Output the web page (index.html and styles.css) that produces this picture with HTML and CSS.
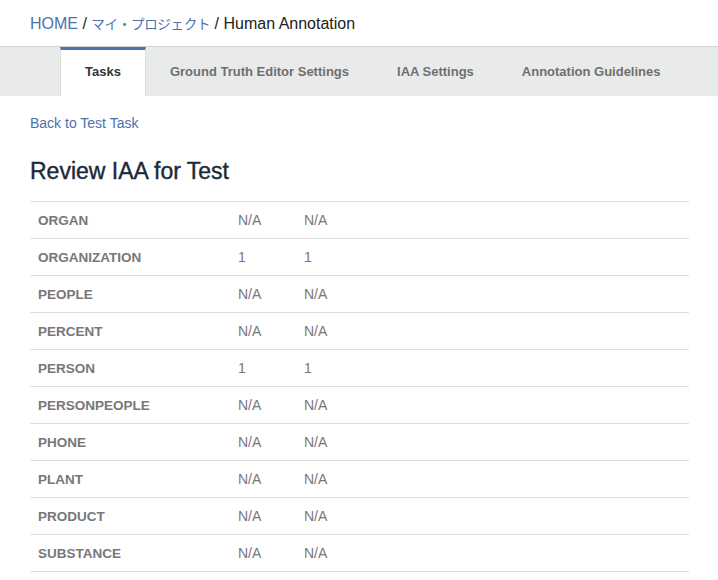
FILE: index.html
```html
<!DOCTYPE html>
<html lang="en">
<head>
    <meta charset="UTF-8">
    <title>Review IAA</title>
    <link rel="stylesheet" href="styles.css">
</head>
<body>
    <div class="breadcrumb">
        <a href="#">HOME</a> / <a class="jp" href="#">マイ・プロジェクト</a> / <span>Human Annotation</span>
    </div>
    <div class="tabs">
        <div class="tab active">Tasks</div>
        <div class="tab">Ground Truth Editor Settings</div>
        <div class="tab">IAA Settings</div>
        <div class="tab">Annotation Guidelines</div>
    </div>
    <div class="content">
        <a class="back-link" href="#">Back to Test Task</a>
        <h1 class="title">Review IAA for Test</h1>
        <table class="iaa-table">
            <tr><td class="type">ORGAN</td><td>N/A</td><td>N/A</td><td></td></tr>
            <tr><td class="type">ORGANIZATION</td><td>1</td><td>1</td><td></td></tr>
            <tr><td class="type">PEOPLE</td><td>N/A</td><td>N/A</td><td></td></tr>
            <tr><td class="type">PERCENT</td><td>N/A</td><td>N/A</td><td></td></tr>
            <tr><td class="type">PERSON</td><td>1</td><td>1</td><td></td></tr>
            <tr><td class="type">PERSONPEOPLE</td><td>N/A</td><td>N/A</td><td></td></tr>
            <tr><td class="type">PHONE</td><td>N/A</td><td>N/A</td><td></td></tr>
            <tr><td class="type">PLANT</td><td>N/A</td><td>N/A</td><td></td></tr>
            <tr><td class="type">PRODUCT</td><td>N/A</td><td>N/A</td><td></td></tr>
            <tr><td class="type">SUBSTANCE</td><td>N/A</td><td>N/A</td><td></td></tr>
        </table>
    </div>
</body>
</html>
```

FILE: styles.css
```css
/* Global */
body {
    font-family: "Liberation Sans", Arial, "Noto Sans CJK JP", sans-serif;
    margin: 0;
    padding: 0;
    background-color: #fff;
    color: #333;
}

a {
    color: #4a72ad;
    text-decoration: none;
}

/* Breadcrumb */
.breadcrumb {
    padding: 2px 30px 0 30px;
    height: 44px;
    line-height: 44px;
    font-size: 16px;
    color: #222;
}

.breadcrumb .jp {
    font-size: 13.5px;
    letter-spacing: -0.3px;
}

/* Tabs */
.tabs {
    display: flex;
    height: 49px;
    padding-left: 60px;
    background-color: #e9ebeb;
    border-top: 1px solid #d4d4d4;
}

.tab {
    display: flex;
    align-items: center;
    padding: 0 23px 4px 23px;
    font-size: 13px;
    font-weight: bold;
    white-space: nowrap;
    color: #6f6f6f;
    border-left: 1px solid transparent;
    border-right: 1px solid transparent;
    border-top: 3px solid transparent;
}

.tab.active {
    padding: 0 24px 4px 24px;
    background-color: #fff;
    color: #333;
    border-top-color: #4a72ad;
    border-left-color: #dcdcdc;
    border-right-color: #dcdcdc;
}

/* Content */
.content {
    padding: 19px 29px 0 30px;
}

.back-link {
    font-size: 14px;
    display: block;
    line-height: 16px;
}

.title {
    font-size: 23px;
    font-weight: normal;
    color: #1c2a38;
    margin: 26px 0 16px 0;
    line-height: 28px;
    -webkit-text-stroke: 0.4px #1c2a38;
}

/* Table */
.iaa-table {
    width: 100%;
    border-collapse: collapse;
    border-top: 1px solid #dedede;
}

.iaa-table td {
    height: 36px;
    padding: 0 8px;
    border-bottom: 1px solid #dedede;
    font-size: 14px;
    color: #777;
}

.iaa-table td:nth-child(1) {
    width: 184px;
}

.iaa-table td:nth-child(2) {
    width: 50px;
}

.iaa-table td:nth-child(3) {
    width: 50px;
}

.iaa-table .type {
    font-size: 13.5px;
    font-weight: bold;
}
```
